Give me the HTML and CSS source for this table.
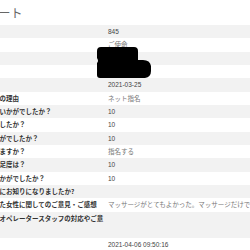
FILE: index.html
```html
<!DOCTYPE html>
<html lang="ja">
<head>
<meta charset="utf-8">
<title>アンケート</title>
<link rel="stylesheet" href="styles.css">
</head>
<body>
<div class="page">
  <h1 class="title">アンケート</h1>
  <table class="survey">
    <colgroup><col class="c-label"><col class="c-value"></colgroup>
    <tbody>
      <tr><th>会員番号</th><td>845</td></tr>
      <tr><th>お名前</th><td class="soft">ご使命</td></tr>
      <tr><th>電話番号</th><td></td></tr>
      <tr><th>メール</th><td></td></tr>
      <tr><th>ご利用日</th><td>2021-03-25</td></tr>
      <tr><th>当店ご利用の理由</th><td class="soft">ネット指名</td></tr>
      <tr><th>接客態度はいかがでしたか？</th><td>10</td></tr>
      <tr><th>料金に納得したか？</th><td>10</td></tr>
      <tr><th>容姿はいかがでしたか？</th><td>10</td></tr>
      <tr><th>また指名しますか？</th><td class="soft">指名する</td></tr>
      <tr><th>総合的な満足度は？</th><td>10</td></tr>
      <tr><th>価格面はいかがでしたか？</th><td>10</td></tr>
      <tr><th>当店を最初にお知りになりましたか?</th><td></td></tr>
      <tr><th>本日担当した女性に関してのご意見・ご感想</th><td class="soft">マッサージがとてもよかった。マッサージだけでなく会話も楽しかったです。</td></tr>
      <tr><th class="wrap">受付電話のオペレータースタッフの対応やご意見</th><td></td></tr>
      <tr><th>回答日時</th><td>2021-04-06 09:50:16</td></tr>
    </tbody>
  </table>
  <svg class="redact" width="56" height="32" viewBox="0 0 56 32" aria-hidden="true">
    <path d="M4,0 Q0,0 0,4 L0,11 Q2,14 0,16 L0,28 Q0,31 3,31 L48,31 Q54,30 54,24 L54,19 Q53,13 46,13 L41,13 L41,4 Q41,0 37,0 Z" fill="#000"/>
  </svg>
</div>
</body>
</html>
```
FILE: styles.css
```css
html, body {
  margin: 0;
  padding: 0;
  background: #fff;
  overflow: hidden;
}
body {
  width: 250px;
  height: 250px;
  font-family: "Liberation Sans", "Noto Sans CJK JP", sans-serif;
}
.page {
  position: relative;
  margin-left: -37px;
  width: 520px;
}
.title {
  margin: 0;
  height: 25px;
  line-height: 25px;
  font-size: 12px;
  font-weight: normal;
  color: #666;
  font-family: "Noto Sans CJK JP", sans-serif;
}
.survey {
  border-collapse: collapse;
  table-layout: fixed;
  width: 520px;
}
.c-label { width: 141px; }
.survey tr:nth-child(odd) {
  background: #f2f2f2;
}
.survey th,
.survey td {
  padding: 0 0 0 4px;
  height: 13.333px;
  font-size: 6.5px;
  line-height: 13.333px;
  text-align: left;
  vertical-align: middle;
  white-space: nowrap;
  overflow: hidden;
}
.survey th {
  font-weight: bold;
  color: #333;
  font-family: "Noto Sans CJK JP", sans-serif;
}
.survey th.wrap {
  white-space: normal;
  line-break: anywhere;
}
.survey td {
  color: #444;
}
.survey td.soft {
  color: #777;
  font-family: "Noto Sans CJK JP", sans-serif;
}
.redact {
  position: absolute;
  left: 134px;
  top: 47px;
}
```
